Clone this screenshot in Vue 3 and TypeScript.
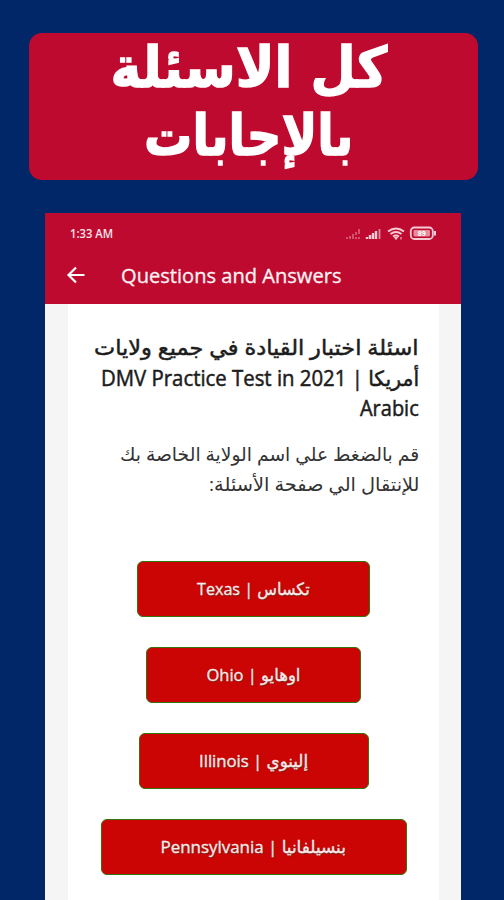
<script setup lang="ts">
import type { Directive } from 'vue'

interface State { label: string; width: number; text: number }

const states: State[] = [
  { label: 'تكساس | Texas', width: 233, text: 113 },
  { label: 'اوهايو | Ohio', width: 215, text: 94 },
  { label: 'إلينوي | Illinois', width: 230, text: 109 },
  { label: 'بنسيلفانيا | Pennsylvania', width: 306, text: 185 },
]

// Condenses a line of text horizontally to the given width.
const vFit: Directive<HTMLElement, number> = {
  mounted(el, binding) {
    el.style.transform = `scaleX(${binding.value / el.offsetWidth})`
  },
}
</script>

<template>
  <main class="page">
    <h1 class="banner">
      <span v-fit="277">كل الاسئلة</span>
      <span v-fit="209">بالإجابات</span>
    </h1>
    <section class="phone">
      <header class="header">
        <div class="status">
          <span v-fit="43" class="line ltr">1:33 AM</span>
          <svg width="91" height="16" viewBox="0 0 91 16" fill="none" stroke="#f5ccd5">
            <path d="M2 14v-2M5 14v-3M8 14v-5M11 14v-2M11 10V7M14 14v-2M14 9V4" stroke-width="1.5" opacity=".5" />
            <path d="M22 14v-2M25 14v-4M28 14V8M31 14V6" stroke-width="2.4" />
            <path d="M34.500 14V4" stroke-width="1.800" opacity=".65" />
            <path d="M43 6.500q8-6 16 0M45.500 9q5.500-4 11 0M48 11.500q3-2 6 0" stroke-width="2" />
            <path d="M49.500 12.500h3L51 14.500zM56 12v2.500" fill="#f5ccd5" />
            <rect x="65.800" y="2.500" width="22" height="11.500" rx="3.500" stroke-width="1.800" />
            <path d="M90 6v4.500" stroke-width="2" />
            <rect x="68.500" y="5" width="16.500" height="6.500" rx="1" fill="#e58b9d" stroke="none" />
            <text x="76.800" y="11" text-anchor="middle" font-size="7" font-weight="700" fill="#fff" stroke="none">89</text>
          </svg>
        </div>
        <div class="toolbar">
          <svg width="18" height="18" viewBox="0 0 18 18" fill="none" stroke="#fff" stroke-width="2.2"><path d="M17.500 9H2M9 1.500L1.500 9 9 16.500" /></svg>
          <span v-fit="220" class="line ltr">Questions and Answers</span>
        </div>
      </header>
      <article class="content">
        <h2>
          <span v-fit="325" class="line">اسئلة اختبار القيادة في جميع ولايات</span>
          <span v-fit="318" class="line">أمريكا | DMV Practice Test in 2021</span>
          <span v-fit="59" class="line">Arabic</span>
        </h2>
        <p>
          <span v-fit="299" class="line">قم بالضغط علي اسم الولاية الخاصة بك</span>
          <span v-fit="211" class="line">للإنتقال الي صفحة الأسئلة:</span>
        </p>
        <div class="buttons">
          <button v-for="s in states" :key="s.label" :style="{ width: s.width + 'px' }">
            <span v-fit="s.text">{{ s.label }}</span>
          </button>
        </div>
      </article>
    </section>
  </main>
</template>

<style>
body { background: #012768; }
</style>
<style scoped>
.page { height: 900px; overflow: hidden; box-sizing: border-box; padding-top: 33px; background: #012768; font-family: "Open Sans", "DejaVu Sans", sans-serif; }
.banner { display: flex; flex-direction: column; align-items: center; box-sizing: border-box; margin: 0 26px 0 29px; padding: 1px 9px 0 0; height: 147px; border-radius: 13px; background: #bf0a30; color: #fff; direction: rtl; font: bold 56px/68px "DejaVu Sans", sans-serif; -webkit-text-stroke: 1.5px #fff; }
.banner span { white-space: nowrap; }
.line { display: block; width: max-content; white-space: nowrap; transform-origin: right center; }
.ltr { transform-origin: left center; }
.phone { margin: 33px 43px 0 45px; background: #f5f5f5; }
.header { height: 91px; background: #bf0a30; color: #fff; box-sizing: border-box; padding: 12px 24px 0 25px; }
.status { display: flex; justify-content: space-between; margin-right: 1px; font-size: 12px; font-weight: 600; line-height: 17px; color: #fbe6ea; }
.toolbar { display: flex; align-items: center; gap: 36px; height: 48px; margin: 9px 0 0 -3px; font-size: 20px; font-weight: 500; color: #fff2f4; -webkit-text-stroke: .3px #fff2f4; }
.content { margin: 0 22px 0 23px; background: #fff; min-height: 600px; padding: 28px 20px 0; direction: rtl; }
h2 { margin: 0; font-size: 21px; font-weight: 500; line-height: 30.5px; color: #1c1c1c; -webkit-text-stroke: .5px #1c1c1c; }
p { margin: 15px 0 0; font-size: 19px; line-height: 30px; color: #333; }
.buttons { display: flex; flex-direction: column; align-items: center; gap: 30px; margin-top: 62px; }
button { display: flex; align-items: center; justify-content: center; height: 56px; border: 1px solid #34730c; border-radius: 6px; background: #cb0404; color: #fbeaea; font: 500 17px "Open Sans", "DejaVu Sans", sans-serif; -webkit-text-stroke: .3px #fbeaea; text-shadow: 1px 1px 1px #5c3020; direction: rtl; padding: 0; flex-shrink: 0; }
button span { white-space: nowrap; }
</style>
